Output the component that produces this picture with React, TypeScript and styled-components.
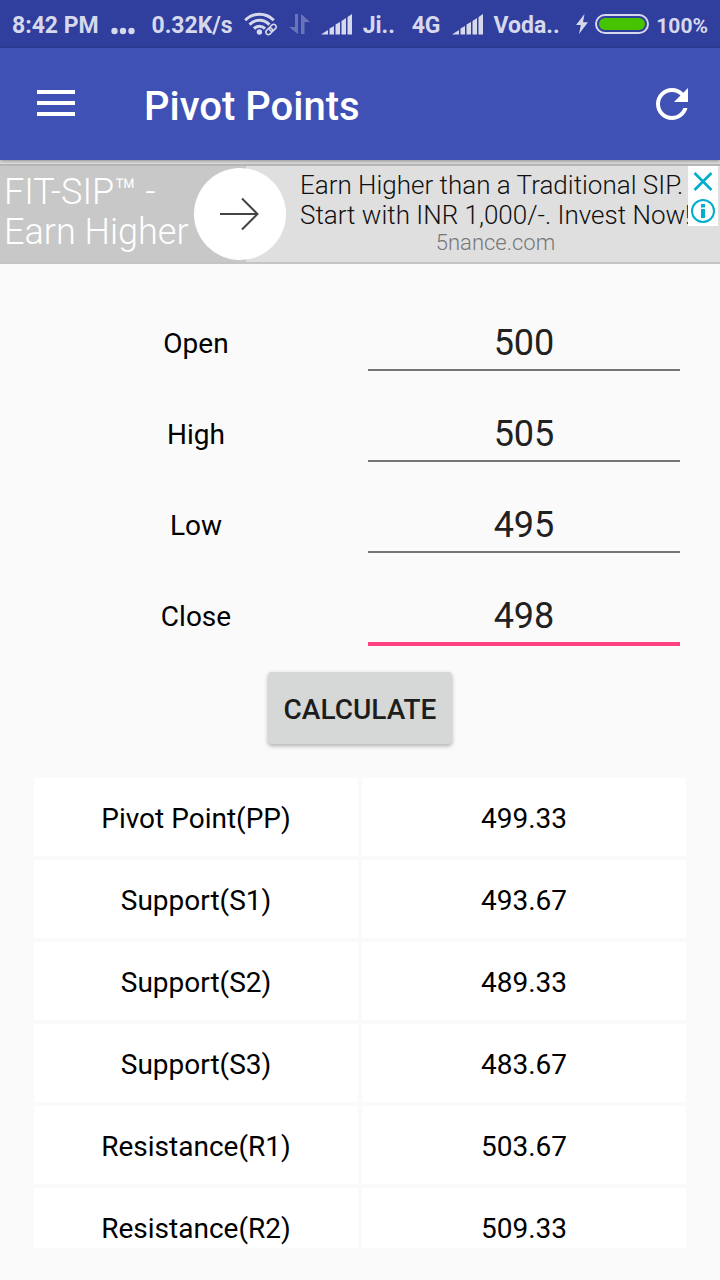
import { useState } from "react";
import styled, { createGlobalStyle } from "styled-components";

const GlobalStyle = createGlobalStyle`
  *, *::before, *::after { box-sizing: border-box; }
  body {
    margin: 0;
    background: #fafafa;
    font-family: Roboto, "Liberation Sans", sans-serif;
    color: #000;
  }
  button, input { font: inherit; color: inherit; }
  svg { display: block; flex: none; }
`;

const Screen = styled.div`
  display: flex;
  flex-direction: column;
  height: 100vh;
  padding-bottom: 32px;
`;

const StatusBar = styled.div`
  flex: none;
  display: flex;
  align-items: center;
  justify-content: space-between;
  height: 48px;
  padding: 0 12px;
  background: #303e9e;
  color: #d6d8ec;
  white-space: nowrap;
`;

const StatusGroup = styled.div<{ $gap: number }>`
  display: flex;
  align-items: center;
  gap: ${(p) => p.$gap}px;
`;

const StatusText = styled.span<{ $small?: boolean }>`
  padding-top: 4px;
  font-size: ${(p) => (p.$small ? 21 : 23)}px;
  font-weight: 700;
  line-height: 28px;
`;

const Toolbar = styled.header`
  position: relative;
  z-index: 1;
  flex: none;
  display: flex;
  align-items: center;
  height: 112px;
  padding: 0 24px 0 32px;
  background: #3f51b5;
  color: #fff;
  box-shadow: 0 1px 4px rgba(0, 0, 0, 0.4);
`;

const Title = styled.h1`
  flex: 1;
  margin: 6px 0 0 64px;
  font-size: 40px;
  font-weight: 500;
  line-height: 48px;
`;

const IconButton = styled.button`
  flex: none;
  padding: 0;
  border: 0;
  background: none;
  cursor: pointer;
`;

const Ad = styled.aside`
  position: relative;
  flex: none;
  display: flex;
  height: 104px;
  padding: 6px 0 2px;
  background: linear-gradient(#e0e0e0 4px, #b8b8b8 4px, #b8b8b8 6px, #c4c4c4 6px);
  font-weight: 300;
`;

const AdHeadline = styled.div`
  width: 246px;
  flex: none;
  padding: 6px 0 0 4px;
  background: #c8c8c8;
  color: #fff;
  font-size: 36px;
  line-height: 40px;
  white-space: nowrap;
`;

const AdBody = styled.div`
  flex: 1;
  padding: 4px 30px 0 54px;
  background: #dfdfdf;
  color: #111;
  font-size: 26px;
  line-height: 30px;
  white-space: nowrap;
`;

const AdSource = styled.div`
  color: #777;
  font-size: 22px;
  line-height: 26px;
  text-align: center;
`;

const AdArrow = styled.a`
  position: absolute;
  top: 8px;
  left: 194px;
  display: grid;
  place-items: center;
  width: 92px;
  height: 92px;
  border-radius: 50%;
  background: #fff;
`;

const AdControls = styled.div`
  position: absolute;
  top: 6px;
  right: 2px;
  display: grid;
  background: #fff;
`;

const Form = styled.form`
  flex: none;
  display: flex;
  flex-direction: column;
  gap: 35px;
  padding: 53px 32px 0;
`;

const Field = styled.div`
  display: grid;
  grid-template-columns: 1fr 1fr;
  height: 56px;
`;

const FieldLabel = styled.label`
  font-size: 28px;
  line-height: 54px;
  text-align: center;
`;

const FieldInput = styled.input<{ $active: boolean }>`
  min-width: 0;
  height: ${(p) => (p.$active ? 56 : 54)}px;
  margin: 0 8px;
  padding: 0;
  border: 0;
  border-bottom: ${(p) => (p.$active ? "4px solid #ff4081" : "2px solid #757575")};
  border-radius: 0;
  outline: 0;
  background: none;
  color: #212121;
  font-size: 36px;
  text-align: center;
`;

const CalculateButton = styled.button`
  align-self: center;
  height: 72px;
  margin-top: -9px;
  padding: 2px 16px 0;
  border: 0;
  border-radius: 4px;
  background: #d6d7d7;
  box-shadow: 0 2px 4px rgba(0, 0, 0, 0.3);
  color: #1d1d1d;
  font-size: 28px;
  font-weight: 500;
  cursor: pointer;
`;

const Results = styled.main`
  flex: 1;
  min-height: 0;
  margin-top: 30px;
  padding: 0 30px;
  overflow-y: auto;
  scrollbar-width: none;
`;

const ResultTable = styled.table`
  width: 100%;
  table-layout: fixed;
  border-collapse: separate;
  border-spacing: 4px;
`;

const Cell = styled.td`
  height: 78px;
  padding: 4px 0 0;
  background: #fff;
  font-size: 28px;
  font-weight: 400;
  line-height: 32px;
  text-align: center;
`;

const FIELDS = ["Open", "High", "Low", "Close"] as const;
type FieldName = (typeof FIELDS)[number];
type Values = Record<FieldName, string>;

function pivots(v: Values): [string, number][] {
  const high = Number(v.High);
  const low = Number(v.Low);
  const pp = (high + low + Number(v.Close)) / 3;
  return [
    ["Pivot Point(PP)", pp],
    ["Support(S1)", 2 * pp - high],
    ["Support(S2)", pp - (high - low)],
    ["Support(S3)", low - 2 * (high - pp)],
    ["Resistance(R1)", 2 * pp - low],
    ["Resistance(R2)", pp + (high - low)],
  ];
}

const Dots = () => (
  <svg width="24" height="28" fill="currentColor" aria-hidden="true">
    <circle cx="3.5" cy="21" r="3.2" />
    <circle cx="12" cy="21" r="3.2" />
    <circle cx="20.5" cy="21" r="3.2" />
  </svg>
);

const Wifi = () => (
  <svg width="34" height="26" viewBox="0 0 34 26" fill="none" stroke="currentColor" aria-hidden="true">
    <g strokeWidth="3">
      <path d="M1.2 9.2A20 20 0 0 1 29.8 9.2" />
      <path d="M5.6 13.6A13.6 13.6 0 0 1 25.4 13.6" />
      <path d="M10 17.6A7.8 7.8 0 0 1 21 17.6" />
    </g>
    <circle cx="15.4" cy="21" r="2.7" fill="currentColor" stroke="none" />
    <g strokeWidth="1.5" transform="rotate(-45 27 18.5)">
      <rect x="20.8" y="16" width="7.4" height="5" rx="2.5" />
      <rect x="25.8" y="16" width="7.4" height="5" rx="2.5" />
    </g>
  </svg>
);

const DataArrows = () => (
  <svg width="21" height="22" viewBox="0 0 21 22" fill="currentColor" opacity="0.35" aria-hidden="true">
    <path d="M6 1h3v20L0 14h6zM12 21h3.500V9H21L12 1z" />
  </svg>
);

const Signal = () => (
  <svg width="31" height="22" viewBox="0 0 31 22" fill="currentColor" aria-hidden="true">
    <path d="M0 21.500L7 17V21.500zM8.500 15.500l4.500-2.500v8.500H8.500zM14.500 11.500l4.500-2.500v12.500h-4.500zM20.500 8l4.500-3v16.500h-4.500zM26.500 4l4.500-3v20.500h-4.500z" />
  </svg>
);

const Bolt = () => (
  <svg width="12" height="20" viewBox="0 0 12 20" fill="currentColor" aria-hidden="true">
    <path d="M8.500 0L0 11h4.800L3 20 12 8.300H7z" />
  </svg>
);

const Battery = () => (
  <svg width="54" height="20" viewBox="0 0 54 20" aria-hidden="true">
    <rect x="1" y="1" width="52" height="18" rx="9" fill="none" stroke="currentColor" strokeWidth="2" />
    <rect x="4" y="4" width="46" height="12" rx="6" fill="#48c300" />
  </svg>
);

export default function App() {
  const [values, setValues] = useState<Values>({ Open: "500", High: "505", Low: "495", Close: "498" });
  const [active, setActive] = useState<FieldName>("Close");
  const [rows, setRows] = useState(() => pivots(values));

  return (
    <>
      <GlobalStyle />
      <Screen>
        <StatusBar>
          <StatusGroup $gap={12}>
            <StatusText>8:42 PM</StatusText>
            <Dots />
          </StatusGroup>
          <StatusGroup $gap={11}>
            <StatusText>0.32K/s</StatusText>
            <Wifi />
            <DataArrows />
            <Signal />
            <StatusText>Ji..</StatusText>
          </StatusGroup>
          <StatusGroup $gap={11}>
            <StatusText>4G</StatusText>
            <Signal />
            <StatusText>Voda..</StatusText>
          </StatusGroup>
          <StatusGroup $gap={7}>
            <Bolt />
            <Battery />
            <StatusText $small>100%</StatusText>
          </StatusGroup>
        </StatusBar>

        <Toolbar>
          <IconButton type="button" aria-label="Menu">
            <svg width="48" height="48" fill="currentColor">
              <path d="M5 10h38v4H5zM5 21h38v4H5zM5 32h38v4H5z" />
            </svg>
          </IconButton>
          <Title>Pivot Points</Title>
          <IconButton type="button" aria-label="Refresh">
            <svg width="48" height="48" viewBox="0 0 24 24" fill="currentColor">
              <path d="M17.65 6.35C16.2 4.9 14.21 4 12 4c-4.42 0-7.99 3.58-7.99 8s3.57 8 7.99 8c3.73 0 6.84-2.55 7.73-6h-2.08c-.82 2.33-3.04 4-5.65 4-3.31 0-6-2.69-6-6s2.69-6 6-6c1.66 0 3.14.69 4.22 1.78L13 11h7V4l-2.35 2.35z" />
            </svg>
          </IconButton>
        </Toolbar>

        <Ad>
          <AdHeadline>
            FIT-SIP™ -<br />
            Earn Higher
          </AdHeadline>
          <AdBody>
            Earn Higher than a Traditional SIP.
            <br />
            Start with INR 1,000/-. Invest Now!
            <AdSource>5nance.com</AdSource>
          </AdBody>
          <AdArrow href="#" aria-label="Open advertisement">
            <svg width="40" height="34" viewBox="0 0 40 34" fill="none" stroke="#444" strokeWidth="2">
              <path d="M0 17h37M22 1.500L37.500 17 22 32.500" />
            </svg>
          </AdArrow>
          <AdControls>
            <IconButton type="button" aria-label="Close advertisement">
              <svg width="30" height="30" fill="none" stroke="#00aecd" strokeWidth="2.600">
                <path d="M6.500 7l17 17M23.500 7l-17 17" />
              </svg>
            </IconButton>
            <IconButton type="button" aria-label="About this advertisement">
              <svg width="30" height="30" fill="none" stroke="#00aecd" strokeWidth="2">
                <circle cx="15" cy="15" r="11" />
                <path d="M15 13v9M15 8v3.500" strokeWidth="4" />
              </svg>
            </IconButton>
          </AdControls>
        </Ad>

        <Form
          onSubmit={(e) => {
            e.preventDefault();
            setRows(pivots(values));
          }}
        >
          {FIELDS.map((name) => (
            <Field key={name}>
              <FieldLabel htmlFor={name}>{name}</FieldLabel>
              <FieldInput
                id={name}
                inputMode="decimal"
                value={values[name]}
                $active={active === name}
                onFocus={() => setActive(name)}
                onChange={(e) => setValues({ ...values, [name]: e.target.value })}
              />
            </Field>
          ))}
          <CalculateButton type="submit">CALCULATE</CalculateButton>
        </Form>

        <Results>
          <ResultTable>
            <tbody>
              {rows.map(([label, value]) => (
                <tr key={label}>
                  <Cell as="th" scope="row">
                    {label}
                  </Cell>
                  <Cell>{value.toFixed(2)}</Cell>
                </tr>
              ))}
            </tbody>
          </ResultTable>
        </Results>
      </Screen>
    </>
  );
}
